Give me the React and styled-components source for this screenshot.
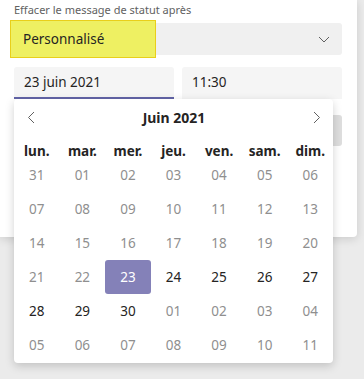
import styled, { createGlobalStyle } from "styled-components";

const GlobalStyle = createGlobalStyle`
  html, body {
    margin: 0;
    min-height: 100%;
    background: #ebebeb;
    font-family: "Noto Sans", "Open Sans", sans-serif;
    color: #252423;
  }
`;

const weekdays = ["lun.", "mar.", "mer.", "jeu.", "ven.", "sam.", "dim."];

const days = [
  ["31", "01", "02", "03", "04", "05", "06"],
  ["07", "08", "09", "10", "11", "12", "13"],
  ["14", "15", "16", "17", "18", "19", "20"],
  ["21", "22", "23", "24", "25", "26", "27"],
  ["28", "29", "30", "01", "02", "03", "04"],
  ["05", "06", "07", "08", "09", "10", "11"],
];

// the 23rd is picked, the days after it until the 30th can be chosen
const dayState = (row, col) => {
  const i = row * 7 + col;
  if (i === 23) return "selected";
  if (i > 23 && i <= 30) return "active";
  return "muted";
};

const ChevronDown = () => (
  <svg width="12" height="7" viewBox="0 0 12 7">
    <polyline points="1,1 6,6 11,1" fill="none" stroke="#616161" strokeWidth="1" />
  </svg>
);

const Chevron = ({ dir }) => (
  <svg width="8" height="13" viewBox="0 0 8 13">
    <polyline
      points={dir === "left" ? "7,1 1.5,6.5 7,12" : "1,1 6.5,6.5 1,12"}
      fill="none"
      stroke="#616161"
      strokeWidth="1"
    />
  </svg>
);

const App = () => {
  return (
    <Page>
      <GlobalStyle />
      <Card>
        <Label>Effacer le message de statut après</Label>
        <Select>
          <Highlight>Personnalisé</Highlight>
          <ChevronDown />
        </Select>
        <InputRow>
          <DateField>
            <Input $active>23 juin 2021</Input>
            <Popup>
              <CalHeader>
                <NavButton>
                  <Chevron dir="left" />
                </NavButton>
                <Month>Juin 2021</Month>
                <NavButton>
                  <Chevron dir="right" />
                </NavButton>
              </CalHeader>
              <Grid>
                {weekdays.map((d) => (
                  <Weekday key={d}>{d}</Weekday>
                ))}
                {days.map((row, r) =>
                  row.map((d, c) => (
                    <Day key={r + "-" + c} $state={dayState(r, c)}>
                      {d}
                    </Day>
                  ))
                )}
              </Grid>
            </Popup>
          </DateField>
          <Input>11:30</Input>
        </InputRow>
        <Actions>
          <GhostButton>Annuler</GhostButton>
        </Actions>
      </Card>
    </Page>
  );
};

const Page = styled.div`
  min-height: 100vh;
  background: #ebebeb;
`;

const Card = styled.div`
  position: relative;
  box-sizing: border-box;
  width: 357px;
  height: 237px;
  padding: 2px 15px 0 14px;
  background: #fff;
  border-radius: 0 0 4px 0;
  box-shadow: 0 2px 10px rgba(0, 0, 0, 0.14);
`;

const Label = styled.div`
  font-size: 11px;
  line-height: 16px;
  color: #616161;
  margin-bottom: 5px;
`;

const Select = styled.div`
  display: flex;
  align-items: center;
  justify-content: space-between;
  height: 32px;
  background: #f0f0f0;
  border-radius: 3px;
  padding-right: 12px;
`;

const Highlight = styled.div`
  box-sizing: border-box;
  display: flex;
  align-items: center;
  margin: -3px 0 -3px -4px;
  height: 38px;
  width: 146px;
  padding-left: 12px;
  background: #eef062;
  border: 1px solid #e9cf1a;
  font-size: 13.5px;
  color: #252423;
`;

const InputRow = styled.div`
  display: grid;
  grid-template-columns: 160px 160px;
  gap: 8px;
  margin-top: 12px;
`;

const DateField = styled.div`
  position: relative;
`;

const Input = styled.div`
  box-sizing: border-box;
  display: flex;
  align-items: center;
  height: 32px;
  padding: 0 10px;
  font-size: 13.5px;
  background: #f5f5f5;
  border-radius: 3px 3px 0 0;
  border-bottom: 2px solid ${(p) => (p.$active ? "#6264a7" : "transparent")};
`;

const Actions = styled.div`
  display: flex;
  justify-content: flex-end;
  margin-top: 16px;
`;

const GhostButton = styled.div`
  width: 96px;
  height: 31px;
  border-radius: 3px;
  background: #dedede;
  font-size: 13px;
  display: flex;
  align-items: center;
  justify-content: center;
`;

const Popup = styled.div`
  position: absolute;
  top: 100%;
  left: 0;
  z-index: 10;
  width: 319px;
  background: #fff;
  border-radius: 4px;
  box-shadow: 0 3px 10px rgba(0, 0, 0, 0.18);
  padding-bottom: 1px;
`;

const CalHeader = styled.div`
  display: flex;
  align-items: center;
  justify-content: space-between;
  height: 37px;
  padding: 0 12px 0 13px;
`;

const NavButton = styled.div`
  display: flex;
  align-items: center;
`;

const Month = styled.div`
  font-size: 14px;
  font-weight: 700;
`;

const Grid = styled.div`
  display: grid;
  grid-template-columns: repeat(7, 1fr);
  grid-template-rows: 22px;
  grid-auto-rows: 34px;
`;

const Weekday = styled.div`
  display: flex;
  align-items: center;
  justify-content: center;
  font-size: 13.5px;
  font-weight: 700;
  padding-top: 7px;
`;

const Day = styled.div`
  display: flex;
  align-items: center;
  justify-content: center;
  font-size: 13.5px;
  border-radius: 3px;
  color: ${(p) =>
    p.$state === "selected" ? "#fff" : p.$state === "active" ? "#252423" : "#8f8f8f"};
  background: ${(p) => (p.$state === "selected" ? "#8481b8" : "transparent")};
`;

export default App;
